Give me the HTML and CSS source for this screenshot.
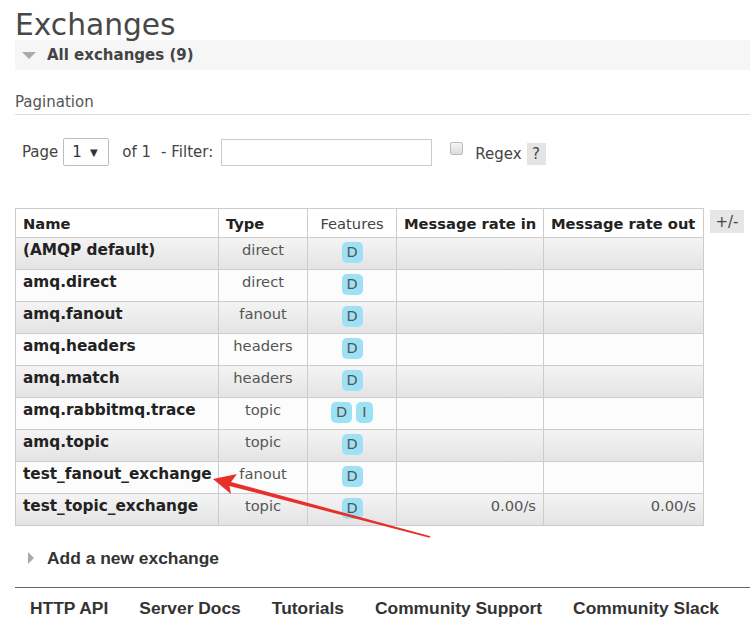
FILE: index.html
```html
<!DOCTYPE html>
<html>
<head>
<meta charset="utf-8">
<link rel="stylesheet" href="styles.css">
</head>
<body>
<div class="page">
  <h1 class="title">Exchanges</h1>
  <div class="section-bar"><span class="tri-down"></span><span class="section-title">All exchanges (9)</span></div>
  <div class="pag-label">Pagination</div>
  <div class="pag-row">
    <span class="lbl">Page</span>
    <span class="select"><span>1</span><span class="caret">▼</span></span>
    <span class="lbl of">of 1</span>
    <span class="lbl">- Filter:</span>
    <span class="input"></span>
    <span class="checkbox"></span>
    <span class="lbl regex">Regex</span>
    <span class="help">?</span>
  </div>
  <div class="table-wrap">
    <table class="list">
      <colgroup><col class="c-name"><col class="c-type"><col class="c-feat"><col class="c-in"><col class="c-out"></colgroup>
      <thead>
        <tr><th class="l">Name</th><th class="l">Type</th><th class="feat-h">Features</th><th>Message rate in</th><th>Message rate out</th></tr>
      </thead>
      <tbody>
        <tr class="alt"><td class="name">(AMQP default)</td><td class="type">direct</td><td class="feat"><span class="badge">D</span></td><td></td><td></td></tr>
        <tr><td class="name">amq.direct</td><td class="type">direct</td><td class="feat"><span class="badge">D</span></td><td></td><td></td></tr>
        <tr class="alt"><td class="name">amq.fanout</td><td class="type">fanout</td><td class="feat"><span class="badge">D</span></td><td></td><td></td></tr>
        <tr><td class="name">amq.headers</td><td class="type">headers</td><td class="feat"><span class="badge">D</span></td><td></td><td></td></tr>
        <tr class="alt"><td class="name">amq.match</td><td class="type">headers</td><td class="feat"><span class="badge">D</span></td><td></td><td></td></tr>
        <tr><td class="name">amq.rabbitmq.trace</td><td class="type">topic</td><td class="feat"><span class="badge">D</span><span class="badge narrow">I</span></td><td></td><td></td></tr>
        <tr class="alt"><td class="name">amq.topic</td><td class="type">topic</td><td class="feat"><span class="badge">D</span></td><td></td><td></td></tr>
        <tr><td class="name">test_fanout_exchange</td><td class="type">fanout</td><td class="feat"><span class="badge">D</span></td><td></td><td></td></tr>
        <tr class="alt"><td class="name">test_topic_exchange</td><td class="type">topic</td><td class="feat"><span class="badge">D</span></td><td class="rate">0.00/s</td><td class="rate">0.00/s</td></tr>
      </tbody>
    </table>
    <span class="plusminus">+/-</span>
  </div>
  <div class="add-row"><span class="tri-right"></span><span class="add-text">Add a new exchange</span></div>
  <div class="footer">
    <span>HTTP API</span><span>Server Docs</span><span>Tutorials</span><span>Community Support</span><span>Community Slack</span>
  </div>
</div>
<svg class="arrow" width="750" height="636" viewBox="0 0 750 636">
  <polygon points="213,479 237,474 231,482 430.5,536.2 429.5,537.8 229.5,486 231,494" fill="#e8302a"/>
</svg>
</body>
</html>
```
FILE: styles.css
```css
html, body {
  margin: 0;
  padding: 0;
  background: #fff;
}
body {
  font-family: "DejaVu Sans", Verdana, sans-serif;
  color: #444;
  position: relative;
  width: 750px;
  height: 636px;
  overflow: hidden;
}
.page {
  margin-left: 15px;
}
.title {
  margin: 0;
  padding-top: 10px;
  font-size: 29.7px;
  line-height: 29px;
  font-weight: normal;
  color: #484848;
  height: 30px;
}
.section-bar {
  margin-top: 0;
  height: 30px;
  background: #f6f6f6;
  display: flex;
  align-items: center;
}
.tri-down {
  width: 0;
  height: 0;
  margin-left: 7px;
  border-left: 7px solid transparent;
  border-right: 7px solid transparent;
  border-top: 7px solid #aaa;
}
.section-title {
  margin-left: 11px;
  font-size: 15px;
  font-weight: bold;
  color: #444;
}
.pag-label {
  margin-top: 23px;
  font-size: 15px;
  line-height: 18px;
  padding-bottom: 3px;
  border-bottom: 1px solid #ddd;
  color: #555;
}
.pag-row {
  margin-top: 23px;
  height: 28px;
  display: flex;
  align-items: center;
  font-size: 15px;
  color: #444;
}
.lbl {
  white-space: nowrap;
}
.pag-row > .lbl:first-child {
  margin-left: 7px;
}
.select {
  margin-left: 5px;
  width: 46px;
  height: 28px;
  box-sizing: border-box;
  border: 1px solid #bbb;
  border-radius: 2px;
  display: flex;
  align-items: center;
  padding-left: 8px;
  gap: 8px;
  color: #333;
}
.caret {
  font-size: 10px;
}
.of {
  margin-left: 13px;
  margin-right: 10px;
}
.input {
  margin-left: 8px;
  width: 211px;
  height: 27px;
  box-sizing: border-box;
  border: 1px solid #ccc;
}
.checkbox {
  margin-left: 18px;
  margin-top: -8px;
  width: 13px;
  height: 13px;
  box-sizing: border-box;
  border: 1px solid #bbb;
  border-radius: 2px;
  background: linear-gradient(#f4f4f4, #dcdcdc);
}
.regex {
  margin-left: 12px;
  position: relative;
  top: 2px;
}
.help {
  margin-left: 5px;
  margin-top: 4px;
  width: 19px;
  height: 22px;
  background: #e4e4e4;
  display: flex;
  align-items: center;
  justify-content: center;
  font-size: 15px;
  color: #444;
}
.table-wrap {
  margin-top: 42px;
  display: flex;
  align-items: flex-start;
}
.list {
  border-collapse: collapse;
  table-layout: fixed;
  width: 688px;
  font-size: 14.7px;
  border: 1px solid #ccc;
}
.c-name { width: 203px; }
.c-type { width: 89px; }
.c-feat { width: 89px; }
.c-in { width: 147px; }
.c-out { width: 160px; }
.list th {
  height: 29px;
  padding: 0 7px;
  border: 1px solid #ccc;
  text-align: left;
  font-weight: bold;
  color: #222;
  white-space: nowrap;
  box-sizing: border-box;
}
.list th.feat-h {
  font-weight: normal;
  text-align: center;
  color: #444;
}
.list td {
  height: 32px;
  box-sizing: border-box;
  padding: 3px 7px 0;
  vertical-align: top;
  line-height: 18px;
  border-left: 1px solid #ccc;
  border-right: 1px solid #ccc;
  border-top: 1px solid #ccc;
  white-space: nowrap;
}
.list tbody tr {
  background: #fcfcfc;
}
.list tbody tr.alt {
  background: linear-gradient(#f4f4f4, #e3e3e3);
}
.name {
  font-weight: bold;
  color: #222;
  font-size: 15.3px;
}
.type {
  text-align: center;
  color: #555;
}
.feat {
  text-align: center;
}
.list td.feat {
  padding-top: 4px;
}
.badge {
  display: inline-block;
  width: 21px;
  height: 21px;
  line-height: 21px;
  border-radius: 5px;
  background: #9de2f4;
  color: #555;
  font-size: 14.5px;
  text-align: center;
  margin: 0 2px;
  vertical-align: top;
}
.badge.narrow {
  width: 17px;
}
.rate {
  text-align: right;
  color: #555;
}
.plusminus {
  margin-left: 6px;
  margin-top: 2px;
  width: 34px;
  height: 23px;
  background: #e6e6e6;
  display: flex;
  align-items: center;
  justify-content: center;
  font-size: 15px;
  color: #444;
}
.add-row {
  margin-top: 22px;
  height: 20px;
  display: flex;
  align-items: center;
}
.tri-right {
  margin-left: 13px;
  width: 0;
  height: 0;
  border-top: 6px solid transparent;
  border-bottom: 6px solid transparent;
  border-left: 6px solid #aaa;
}
.add-text {
  margin-left: 13px;
  font-family: "Liberation Sans", Arial, sans-serif;
  font-weight: bold;
  font-size: 17.4px;
  color: #333;
}
.footer {
  margin-top: 19px;
  border-top: 1px solid #666;
  padding-top: 10px;
  padding-left: 15px;
  display: flex;
  gap: 31px;
  font-family: "Liberation Sans", Arial, sans-serif;
  font-weight: bold;
  font-size: 17.4px;
  color: #333;
  white-space: nowrap;
}
.arrow {
  position: absolute;
  left: 0;
  top: 0;
  pointer-events: none;
}
```
